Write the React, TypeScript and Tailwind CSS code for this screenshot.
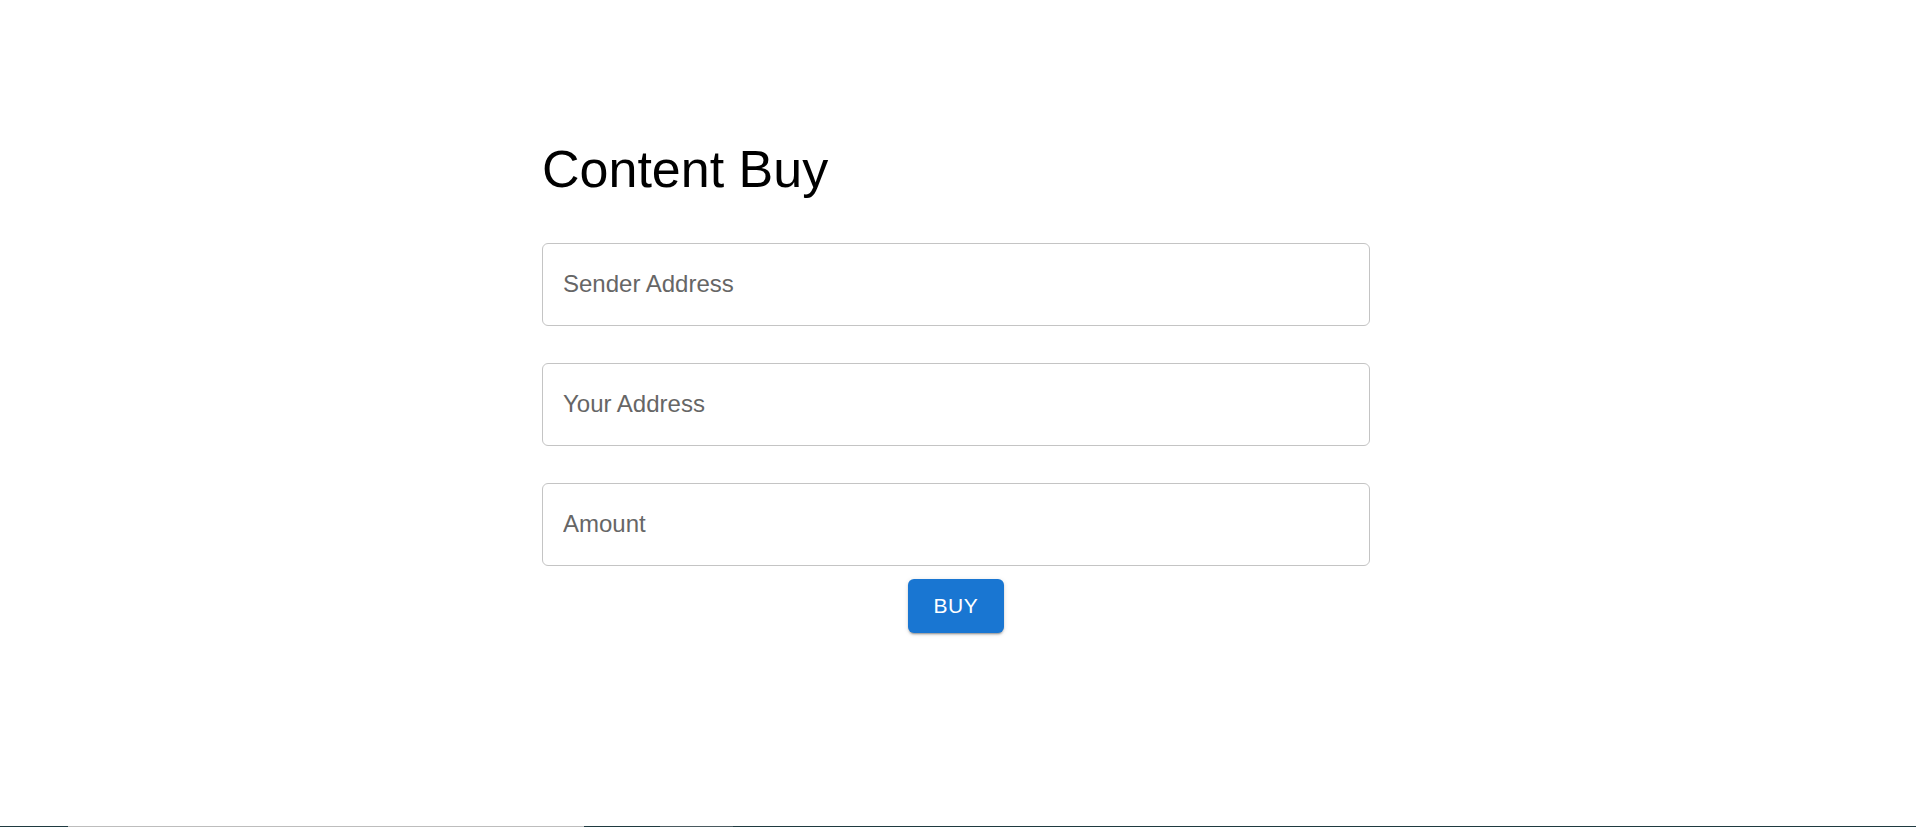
import React from "react";

function Field({ label }: { label: string }) {
  return (
    <div className="h-[83px] w-full rounded-[6px] border border-[#c4c4c4] flex items-center pl-[20px] pb-[2px]">
      <input
        placeholder={label}
        className="w-full bg-transparent outline-none text-[24px] text-black placeholder:text-[#666666]"
      />
    </div>
  );
}

export default function App() {
  return (
    <div
      className="h-[827px] bg-white flex flex-col overflow-hidden"
      style={{ fontFamily: '"Liberation Sans", Arial, sans-serif' }}
    >
      <main className="flex-1 flex justify-center pr-[4px] pt-[139px]">
        <div className="w-[828px] flex flex-col">
          <h1 className="text-[52px] leading-[60px] font-normal text-black">
            Content Buy
          </h1>
          <div className="mt-[44px] flex flex-col gap-[37px]">
            <Field label="Sender Address" />
            <Field label="Your Address" />
            <Field label="Amount" />
          </div>
          <div className="mt-[13px] flex justify-center">
            <button className="w-[96px] h-[54px] rounded-[6px] bg-[#1976d2] text-white text-[21px] font-medium tracking-[0.6px] shadow-[0_3px_1px_-2px_rgba(0,0,0,0.2),0_2px_2px_0_rgba(0,0,0,0.14),0_1px_5px_0_rgba(0,0,0,0.12)]">
              BUY
            </button>
          </div>
        </div>
      </main>

      {/* strip at bottom edge */}
      <div className="h-px flex">
        <div className="w-[68px] bg-[#1f3a40]" />
        <div className="w-[516px] bg-[#bdbdbd]" />
        <div className="w-[76px] bg-[#1f3a40]" />
        <div className="w-[73px] bg-[#4a5a60]" />
        <div className="flex-1 bg-[#1f3a40]" />
      </div>
    </div>
  );
}
